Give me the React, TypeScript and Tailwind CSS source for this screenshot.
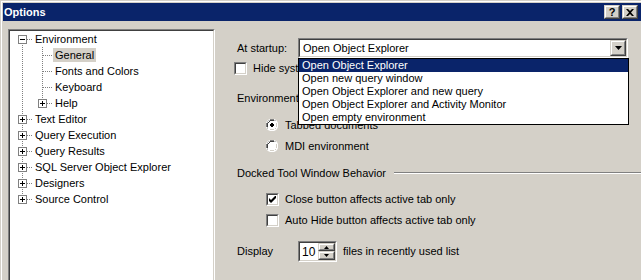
import React from 'react'

const tree = [
  { label: 'Environment', level: 0, box: 'minus', up: false, down: true, rails: [] as boolean[] },
  { label: 'General', level: 1, up: true, down: true, rails: [true], selected: true },
  { label: 'Fonts and Colors', level: 1, up: true, down: true, rails: [true] },
  { label: 'Keyboard', level: 1, up: true, down: true, rails: [true] },
  { label: 'Help', level: 1, box: 'plus', up: true, down: false, rails: [true] },
  { label: 'Text Editor', level: 0, box: 'plus', up: true, down: true, rails: [] },
  { label: 'Query Execution', level: 0, box: 'plus', up: true, down: true, rails: [] },
  { label: 'Query Results', level: 0, box: 'plus', up: true, down: true, rails: [] },
  { label: 'SQL Server Object Explorer', level: 0, box: 'plus', up: true, down: true, rails: [] },
  { label: 'Designers', level: 0, box: 'plus', up: true, down: true, rails: [] },
  { label: 'Source Control', level: 0, box: 'plus', up: true, down: false, rails: [] },
]

const startupOptions = [
  'Open Object Explorer',
  'Open new query window',
  'Open Object Explorer and new query',
  'Open Object Explorer and Activity Monitor',
  'Open empty environment',
]

function Rail() {
  return (
    <svg width="20" height="16" className="shrink-0">
      <line x1="10.5" y1="0" x2="10.5" y2="16" stroke="#808080" strokeDasharray="1 1" />
    </svg>
  )
}

function Connector({ up, down, box }: { up: boolean; down: boolean; box?: string }) {
  return (
    <svg width="20" height="16" className="shrink-0">
      {up && <line x1="10.5" y1="0" x2="10.5" y2="8" stroke="#808080" strokeDasharray="1 1" />}
      {down && <line x1="10.5" y1="8" x2="10.5" y2="16" stroke="#808080" strokeDasharray="1 1" />}
      <line x1={box ? 15 : 11} y1="8.5" x2="20" y2="8.5" stroke="#808080" strokeDasharray="1 1" />
      {box && (
        <>
          <rect x="6.5" y="4.5" width="8" height="8" fill="#fff" stroke="#808080" />
          <line x1="8" y1="8.5" x2="13" y2="8.5" stroke="#000" />
          {box === 'plus' && <line x1="10.5" y1="6" x2="10.5" y2="11" stroke="#000" />}
        </>
      )}
    </svg>
  )
}

function Check({ checked }: { checked?: boolean }) {
  return (
    <span className="flex h-[13px] w-[13px] shrink-0 border border-t-[#808080] border-l-[#808080] border-b-white border-r-white">
      <span className="flex flex-1 items-center justify-center border border-t-[#404040] border-l-[#404040] border-b-[#d4d0c8] border-r-[#d4d0c8] bg-white">
        {checked && (
          <svg width="7" height="7" viewBox="0 0 7 7">
            <path d="M0 2v3l2 2 5-5V-1L2 4z" fill="#000" />
          </svg>
        )}
      </span>
    </span>
  )
}

function Radio({ checked }: { checked?: boolean }) {
  return (
    <svg width="12" height="12" viewBox="0 0 12 12" className="shrink-0">
      <path d="M4 0h4l2 1 1 1 1 2v4l-1 2-1 1-2 1H4L2 11 1 10 0 8V4l1-2 1-1z" fill="#fff" />
      <path d="M4 0.5h4M2.5 1.5h1M8.5 1.5h1M1.5 2.5v1M0.5 4v4M1.5 8.5v1" stroke="#808080" />
      <path d="M4 1.5h4M3 2.5h1M1.5 4v4M2.5 3v1" stroke="#404040" />
      <path d="M10.5 2.5v1M11.5 4v4M10.5 8.5v1M9.5 10.5h-1M8 11.5H4M3.5 10.5h-1" stroke="#fff" />
      <path d="M10.5 4v4M9.5 9v1M8 10.5H4" stroke="#d4d0c8" />
      {checked && <path d="M5 4h2v1h1v2H7v1H5V7H4V5h1z" fill="#000" />}
    </svg>
  )
}

function RaisedButton({ className, children }: { className?: string; children?: React.ReactNode }) {
  return (
    <span className={`flex shrink-0 border border-t-[#d4d0c8] border-l-[#d4d0c8] border-b-[#404040] border-r-[#404040] ${className ?? ''}`}>
      <span className="flex flex-1 items-center justify-center border border-t-white border-l-white border-b-[#808080] border-r-[#808080] bg-[#d4d0c8]">
        {children}
      </span>
    </span>
  )
}

export default function App() {
  return (
    <div className="h-[280px] w-[641px] overflow-hidden border-t border-l border-[#d4d0c8] bg-[#d4d0c8] font-['Liberation_Sans',Arial,sans-serif] text-[11px] text-black">
      <div className="h-full border-t border-l border-white pt-[1px] pl-[1px]">
        {/* Title bar */}
        <div className="flex h-[18px] items-center justify-between bg-[#0a246a] pl-[1px] pr-[3px]">
          <span className="font-bold text-white">Options</span>
          <div className="flex items-center gap-[2px]">
            <RaisedButton className="h-[14px] w-[16px]">
              <span className="text-[11px] font-bold leading-none">?</span>
            </RaisedButton>
            <RaisedButton className="h-[14px] w-[16px]">
              <svg width="8" height="7" viewBox="0 0 8 7">
                <path d="M0 0h2l2 2 2-2h2L5 3.5 8 7H6L4 5 2 7H0l3-3.5z" fill="#000" />
              </svg>
            </RaisedButton>
          </div>
        </div>

        <div className="flex pt-[8px] pl-[5px]">
          {/* Tree */}
          <div className="h-[260px] w-[207px] shrink-0 border border-t-[#808080] border-l-[#808080] border-b-white border-r-white">
            <div className="h-full border border-t-[#404040] border-l-[#404040] border-b-[#d4d0c8] border-r-[#d4d0c8] bg-white pl-[2px]">
              {tree.map((n) => (
                <div key={n.label} className="flex h-4 items-center">
                  {n.rails.map((r, i) => (r ? <Rail key={i} /> : <span key={i} className="w-5" />))}
                  <Connector up={n.up} down={n.down} box={n.box} />
                  <span className={`ml-[1px] h-[14px] px-[2px] leading-[14px] whitespace-nowrap ${n.selected ? 'bg-[#d4d0c8]' : ''}`}>
                    {n.label}
                  </span>
                </div>
              ))}
            </div>
          </div>

          {/* Settings */}
          <div className="flex flex-1 flex-col pt-[9px] pl-[22px]">
            <div className="flex h-[20px] items-center">
              <span className="w-[61px]">At startup:</span>
              <div className="relative w-[330px]">
                <div className="flex h-[20px] border border-t-[#808080] border-l-[#808080] border-b-white border-r-white">
                  <div className="flex flex-1 items-center border border-t-[#404040] border-l-[#404040] border-b-[#d4d0c8] border-r-[#d4d0c8] bg-white pl-[3px]">
                    <span className="flex-1">Open Object Explorer</span>
                    <RaisedButton className="h-[16px] w-[16px]">
                      <svg width="7" height="4" viewBox="0 0 7 4">
                        <path d="M0 0h7L3.5 4z" fill="#000" />
                      </svg>
                    </RaisedButton>
                  </div>
                </div>
                <div className="absolute top-full left-0 z-10 w-[331px] border border-black bg-white">
                  {startupOptions.map((o, i) => (
                    <div
                      key={o}
                      className={`h-[13px] pl-[3px] leading-[13px] whitespace-nowrap ${i === 0 ? 'bg-[#0a246a] text-white' : ''}`}
                    >
                      {o}
                    </div>
                  ))}
                </div>
              </div>
            </div>

            {/* labels below are partly hidden behind the open list */}
            <div className="mt-[4px] -ml-[3px] flex h-[13px] w-[64px] items-center gap-[6px] overflow-hidden">
              <Check />
              <span className="whitespace-nowrap">Hide system objects in Object Explorer</span>
            </div>

            <div className="mt-[16px] flex h-[14px] w-[61px] items-center overflow-hidden whitespace-nowrap">Environment layout</div>

            <div className="mt-[13px] ml-[29px] flex h-[14px] items-center gap-[7px]">
              <Radio checked />
              <span>Tabbed documents</span>
            </div>
            <div className="mt-[7px] ml-[29px] flex h-[14px] items-center gap-[7px]">
              <Radio />
              <span>MDI environment</span>
            </div>

            <div className="mt-[13px] flex h-[14px] items-center gap-[8px]">
              <span className="whitespace-nowrap">Docked Tool Window Behavior</span>
              <div className="flex-1 border-t border-b border-t-[#808080] border-b-white" />
            </div>

            <div className="mt-[12px] ml-[29px] flex h-[14px] items-center gap-[6px]">
              <Check checked />
              <span>Close button affects active tab only</span>
            </div>
            <div className="mt-[7px] ml-[29px] flex h-[14px] items-center gap-[6px]">
              <Check />
              <span>Auto Hide button affects active tab only</span>
            </div>

            <div className="mt-[14px] flex h-[21px] items-center">
              <span className="w-[61px]">Display</span>
              <div className="flex h-[21px] w-[39px] border border-t-[#808080] border-l-[#808080] border-b-white border-r-white">
                <div className="flex flex-1 items-center border border-t-[#404040] border-l-[#404040] border-b-[#d4d0c8] border-r-[#d4d0c8] bg-white pl-[2px]">
                  <span className="flex-1 text-[12px]">10</span>
                  <div className="flex flex-col">
                    <RaisedButton className="h-[8px] w-[17px]">
                      <svg width="5" height="3" viewBox="0 0 5 3">
                        <path d="M2.5 0L5 3H0z" fill="#000" />
                      </svg>
                    </RaisedButton>
                    <RaisedButton className="h-[9px] w-[17px]">
                      <svg width="5" height="3" viewBox="0 0 5 3">
                        <path d="M0 0h5L2.5 3z" fill="#000" />
                      </svg>
                    </RaisedButton>
                  </div>
                </div>
              </div>
              <span className="ml-[6px]">files in recently used list</span>
            </div>
          </div>
        </div>
      </div>
    </div>
  )
}
